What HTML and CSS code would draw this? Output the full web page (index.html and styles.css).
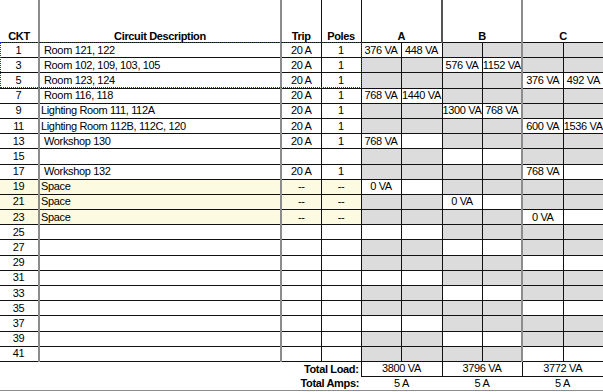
FILE: index.html
```html
<!DOCTYPE html>
<html>
<head>
<meta charset="utf-8">
<title>Panel Schedule</title>
<link rel="stylesheet" href="styles.css">
</head>
<body>
<div class="sheet">
  <table class="panel">
    <colgroup>
      <col class="w-ckt"><col class="w-desc"><col class="w-trip"><col class="w-poles">
      <col class="w-va"><col class="w-va2"><col class="w-va"><col class="w-va"><col class="w-va2"><col class="w-va">
    </colgroup>
    <thead>
      <tr class="head">
        <th>CKT</th><th>Circuit Description</th><th>Trip</th><th>Poles</th>
        <th colspan="2">A</th><th colspan="2">B</th><th colspan="2">C</th>
      </tr>
    </thead>
    <tbody class="rows">
      <tr><td>1</td><td class="in">Room 121, 122</td><td>20 A</td><td>1</td><td>376 VA</td><td>448 VA</td><td class="off"></td><td class="off"></td><td class="off"></td><td class="off"></td></tr>
      <tr><td>3</td><td class="in">Room 102, 109, 103, 105</td><td>20 A</td><td>1</td><td class="off"></td><td class="off"></td><td>576 VA</td><td>1152 VA</td><td class="off"></td><td class="off"></td></tr>
      <tr><td>5</td><td class="in">Room 123, 124</td><td>20 A</td><td>1</td><td class="off"></td><td class="off"></td><td class="off"></td><td class="off"></td><td>376 VA</td><td>492 VA</td></tr>
      <tr><td>7</td><td class="in">Room 116, 118</td><td>20 A</td><td>1</td><td>768 VA</td><td>1440 VA</td><td class="off"></td><td class="off"></td><td class="off"></td><td class="off"></td></tr>
      <tr><td>9</td><td>Lighting Room 111, 112A</td><td>20 A</td><td>1</td><td class="off"></td><td class="off"></td><td>1300 VA</td><td>768 VA</td><td class="off"></td><td class="off"></td></tr>
      <tr><td>11</td><td>Lighting Room 112B, 112C, 120</td><td>20 A</td><td>1</td><td class="off"></td><td class="off"></td><td class="off"></td><td class="off"></td><td>600 VA</td><td>1536 VA</td></tr>
      <tr><td>13</td><td class="in">Workshop 130</td><td>20 A</td><td>1</td><td>768 VA</td><td></td><td class="off"></td><td class="off"></td><td class="off"></td><td class="off"></td></tr>
      <tr><td>15</td><td></td><td></td><td></td><td class="off"></td><td class="off"></td><td></td><td></td><td class="off"></td><td class="off"></td></tr>
      <tr><td>17</td><td class="in">Workshop 132</td><td>20 A</td><td>1</td><td class="off"></td><td class="off"></td><td class="off"></td><td class="off"></td><td>768 VA</td><td></td></tr>
      <tr class="spare"><td>19</td><td>Space</td><td>--</td><td>--</td><td>0 VA</td><td></td><td class="off"></td><td class="off"></td><td class="off"></td><td class="off"></td></tr>
      <tr class="spare"><td>21</td><td>Space</td><td>--</td><td>--</td><td class="off"></td><td class="off"></td><td>0 VA</td><td></td><td class="off"></td><td class="off"></td></tr>
      <tr class="spare"><td>23</td><td>Space</td><td>--</td><td>--</td><td class="off"></td><td class="off"></td><td class="off"></td><td class="off"></td><td>0 VA</td><td></td></tr>
      <tr><td>25</td><td></td><td></td><td></td><td></td><td></td><td class="off"></td><td class="off"></td><td class="off"></td><td class="off"></td></tr>
      <tr><td>27</td><td></td><td></td><td></td><td class="off"></td><td class="off"></td><td></td><td></td><td class="off"></td><td class="off"></td></tr>
      <tr><td>29</td><td></td><td></td><td></td><td class="off"></td><td class="off"></td><td class="off"></td><td class="off"></td><td></td><td></td></tr>
      <tr><td>31</td><td></td><td></td><td></td><td></td><td></td><td class="off"></td><td class="off"></td><td class="off"></td><td class="off"></td></tr>
      <tr><td>33</td><td></td><td></td><td></td><td class="off"></td><td class="off"></td><td></td><td></td><td class="off"></td><td class="off"></td></tr>
      <tr><td>35</td><td></td><td></td><td></td><td class="off"></td><td class="off"></td><td class="off"></td><td class="off"></td><td></td><td></td></tr>
      <tr><td>37</td><td></td><td></td><td></td><td></td><td></td><td class="off"></td><td class="off"></td><td class="off"></td><td class="off"></td></tr>
      <tr><td>39</td><td></td><td></td><td></td><td class="off"></td><td class="off"></td><td></td><td></td><td class="off"></td><td class="off"></td></tr>
      <tr><td>41</td><td></td><td></td><td></td><td class="off"></td><td class="off"></td><td class="off"></td><td class="off"></td><td></td><td></td></tr>
    </tbody>
    <tfoot>
      <tr class="total load">
        <th colspan="4">Total Load:</th><td colspan="2">3800 VA</td><td colspan="2">3796 VA</td><td colspan="2">3772 VA</td>
      </tr>
      <tr class="total amps">
        <th colspan="4">Total Amps:</th><td colspan="2">5 A</td><td colspan="2">5 A</td><td colspan="2">5 A</td>
      </tr>
    </tfoot>
  </table>
  <div class="edge"></div>
  <div class="selection"></div>
</div>
</body>
</html>
```

FILE: styles.css
```css
html, body {
  margin: 0;
  padding: 0;
  background: #ffffff;
}

.sheet {
  position: relative;
  width: 603px;
  height: 392px;
  overflow: hidden;
  font-family: "Liberation Sans", Arial, sans-serif;
  font-size: 11px;
  letter-spacing: -0.35px;
  color: #000;
}

.panel {
  width: 603px;
  table-layout: fixed;
  border-collapse: collapse;
}

.w-ckt { width: 39px; }
.w-desc { width: 242px; }
.w-trip { width: 40px; }
.w-poles { width: 40px; }
.w-va { width: 40px; }
.w-va2 { width: 41px; }

.panel th,
.panel td {
  padding: 0;
  white-space: nowrap;
  overflow: visible;
  text-align: center;
  line-height: 13px;
}

/* header */
.head th {
  height: 42px;
  vertical-align: bottom;
  line-height: 11px;
  padding-bottom: 0;
  font-weight: bold;
  border-bottom: 1px solid #111;
}
.head th:nth-child(1),
.head th:nth-child(2) { border-right: 2px solid #8c8c8c; }
.head th:nth-child(3),
.head th:nth-child(4) { border-right: 1px solid #111; }
.head th:nth-child(5) { border-right: 2px solid #555; }
.head th:nth-child(6) { border-right: 2px solid #8c8c8c; }

/* body rows */
.rows td {
  height: 14.2px;
  border-top: 1px solid #111;
  border-bottom: 1px solid #111;
  vertical-align: middle;
}
.rows td:nth-child(1),
.rows td:nth-child(2) { border-right: 2px solid #8c8c8c; }
.rows td:nth-child(3),
.rows td:nth-child(4),
.rows td:nth-child(5),
.rows td:nth-child(6),
.rows td:nth-child(7),
.rows td:nth-child(9) { border-right: 1px solid #111; }
.rows td:nth-child(8) { border-right: 2px solid #8c8c8c; }

.rows td:nth-child(2) {
  text-align: left;
  padding-left: 1px;
}
.rows td.in { padding-left: 4px; }

.rows td:nth-child(1) { padding-right: 1px; }

.rows td.off { background: #dcdcdc; }

.spare td:nth-child(-n+4) { background: #fdfae2; }

/* totals */
.total th {
  text-align: right;
  font-weight: bold;
  padding-right: 2px;
}
.load th,
.load td { height: 14px; }
.load td {
  border: 1px solid #111;
  border-top: none;
}
.load td:last-child { border-right: none; }
.amps th,
.amps td { height: 13px; }

.edge {
  border-top: 1px solid #8c8c8c;
}

/* dotted selection marquee */
.selection {
  position: absolute;
  left: 0;
  top: 42px;
  width: 362px;
  height: 46px;
  box-sizing: border-box;
  border: 1px dotted #1f24ff;
  pointer-events: none;
}
```
